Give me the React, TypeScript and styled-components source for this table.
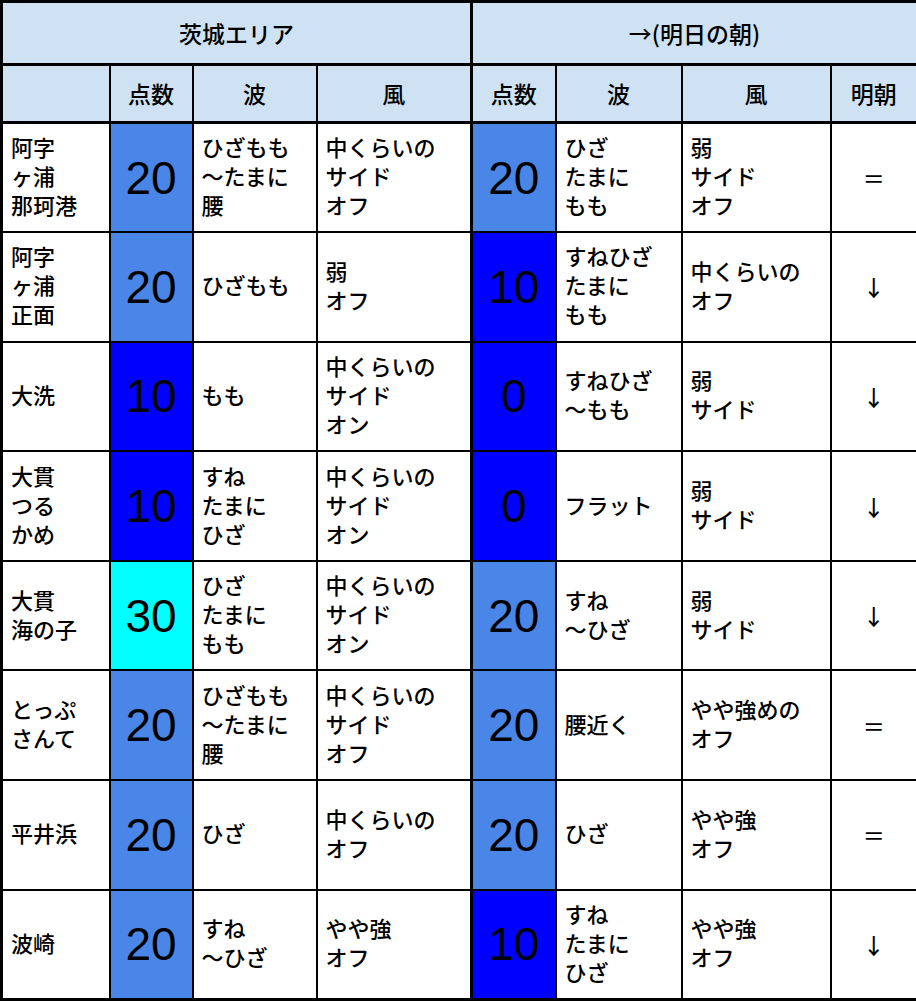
import styled, { createGlobalStyle } from "styled-components";

const GlobalStyle = createGlobalStyle`
  html, body {
    margin: 0;
    padding: 0;
    background: #ffffff;
  }
  body {
    font-family: "Liberation Sans", "Noto Sans CJK JP", sans-serif;
    color: #000;
  }
`;

type Score = 0 | 10 | 20 | 30;

interface RowType {
  name: string;
  score: Score;
  wave: string;
  wind: string;
  nextScore: Score;
  nextWave: string;
  nextWind: string;
  trend: string;
}

const rows: RowType[] = [
  {
    name: "阿字\nヶ浦\n那珂港",
    score: 20,
    wave: "ひざもも\n〜たまに\n腰",
    wind: "中くらいの\nサイド\nオフ",
    nextScore: 20,
    nextWave: "ひざ\nたまに\nもも",
    nextWind: "弱\nサイド\nオフ",
    trend: "＝",
  },
  {
    name: "阿字\nヶ浦\n正面",
    score: 20,
    wave: "ひざもも",
    wind: "弱\nオフ",
    nextScore: 10,
    nextWave: "すねひざ\nたまに\nもも",
    nextWind: "中くらいの\nオフ",
    trend: "↓",
  },
  {
    name: "大洗",
    score: 10,
    wave: "もも",
    wind: "中くらいの\nサイド\nオン",
    nextScore: 0,
    nextWave: "すねひざ\n〜もも",
    nextWind: "弱\nサイド",
    trend: "↓",
  },
  {
    name: "大貫\nつる\nかめ",
    score: 10,
    wave: "すね\nたまに\nひざ",
    wind: "中くらいの\nサイド\nオン",
    nextScore: 0,
    nextWave: "フラット",
    nextWind: "弱\nサイド",
    trend: "↓",
  },
  {
    name: "大貫\n海の子",
    score: 30,
    wave: "ひざ\nたまに\nもも",
    wind: "中くらいの\nサイド\nオン",
    nextScore: 20,
    nextWave: "すね\n〜ひざ",
    nextWind: "弱\nサイド",
    trend: "↓",
  },
  {
    name: "とっぷ\nさんて",
    score: 20,
    wave: "ひざもも\n〜たまに\n腰",
    wind: "中くらいの\nサイド\nオフ",
    nextScore: 20,
    nextWave: "腰近く",
    nextWind: "やや強めの\nオフ",
    trend: "＝",
  },
  {
    name: "平井浜",
    score: 20,
    wave: "ひざ",
    wind: "中くらいの\nオフ",
    nextScore: 20,
    nextWave: "ひざ",
    nextWind: "やや強\nオフ",
    trend: "＝",
  },
  {
    name: "波崎",
    score: 20,
    wave: "すね\n〜ひざ",
    wind: "やや強\nオフ",
    nextScore: 10,
    nextWave: "すね\nたまに\nひざ",
    nextWind: "やや強\nオフ",
    trend: "↓",
  },
];

const scoreColors: Record<Score, string> = {
  0: "#0000ff",
  10: "#0000ff",
  20: "#4a86e8",
  30: "#00ffff",
};

const Table = styled.table`
  width: 916px;
  border-collapse: collapse;
  table-layout: fixed;
  border: 3px solid #000;
  font-size: 22px;
  line-height: 29px;
  font-weight: 500;
`;

const HeadCell = styled.th<{ $split?: boolean }>`
  background: #cfe2f3;
  font-family: "Noto Sans CJK JP", sans-serif;
  font-size: 23px;
  font-weight: 500;
  text-align: center;
  vertical-align: middle;
  padding: 0;
  border: 2px solid #000;
  border-bottom-width: 3px;
  ${(p) => (p.$split ? "border-right-width: 3px;" : "")}
`;

const TopRow = styled.tr`
  height: 63px;
`;

const LabelRow = styled.tr`
  height: 58px;
`;

const BodyRow = styled.tr`
  height: 109.6px;
`;

const TextCell = styled.td<{ $split?: boolean }>`
  padding: 0 8px;
  text-align: left;
  vertical-align: middle;
  white-space: pre-line;
  border: 2px solid #000;
  ${(p) => (p.$split ? "border-right-width: 3px;" : "")}
`;

const ScoreCell = styled.td<{ $score: Score }>`
  padding: 0;
  text-align: center;
  vertical-align: middle;
  background: ${(p) => scoreColors[p.$score]};
  font-family: "Liberation Sans", sans-serif;
  font-weight: normal;
  font-size: 46px;
  line-height: 1;
  border: 2px solid #000;
`;

const TrendCell = styled.td`
  padding: 0;
  text-align: center;
  vertical-align: middle;
  font-family: "Noto Sans CJK JP", sans-serif;
  border: 2px solid #000;
`;

export default function App() {
  return (
    <>
      <GlobalStyle />
      <Table>
        <colgroup>
          <col style={{ width: 108 }} />
          <col style={{ width: 83 }} />
          <col style={{ width: 124 }} />
          <col style={{ width: 155 }} />
          <col style={{ width: 84 }} />
          <col style={{ width: 126 }} />
          <col style={{ width: 149 }} />
          <col style={{ width: 87 }} />
        </colgroup>
        <thead>
          <TopRow>
            <HeadCell colSpan={4} $split>
              茨城エリア
            </HeadCell>
            <HeadCell colSpan={4}>→(明日の朝)</HeadCell>
          </TopRow>
          <LabelRow>
            <HeadCell />
            <HeadCell>点数</HeadCell>
            <HeadCell>波</HeadCell>
            <HeadCell $split>風</HeadCell>
            <HeadCell>点数</HeadCell>
            <HeadCell>波</HeadCell>
            <HeadCell>風</HeadCell>
            <HeadCell>明朝</HeadCell>
          </LabelRow>
        </thead>
        <tbody>
          {rows.map((r) => (
            <BodyRow key={r.name}>
              <TextCell>{r.name}</TextCell>
              <ScoreCell $score={r.score}>{r.score}</ScoreCell>
              <TextCell>{r.wave}</TextCell>
              <TextCell $split>{r.wind}</TextCell>
              <ScoreCell $score={r.nextScore}>{r.nextScore}</ScoreCell>
              <TextCell>{r.nextWave}</TextCell>
              <TextCell>{r.nextWind}</TextCell>
              <TrendCell>{r.trend}</TrendCell>
            </BodyRow>
          ))}
        </tbody>
      </Table>
    </>
  );
}
